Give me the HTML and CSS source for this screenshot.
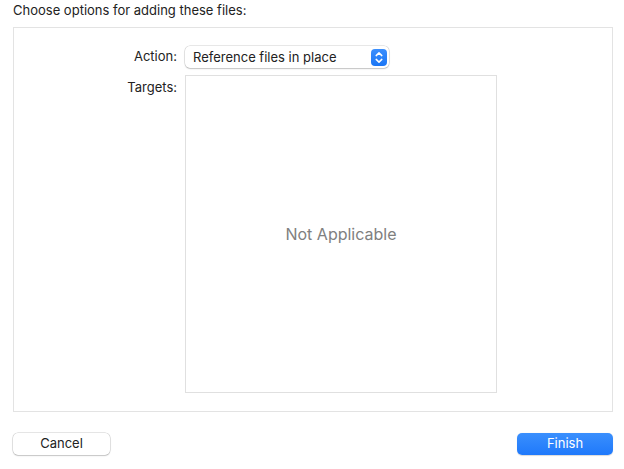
FILE: index.html
```html
<!DOCTYPE html>
<html>
<head>
<meta charset="utf-8">
<link rel="stylesheet" href="styles.css">
</head>
<body>
<div class="sheet">
  <div class="title">Choose options for adding these files:</div>
  <div class="panel">
    <div class="form">
      <div class="label action-label">Action:</div>
      <div class="popup">
        <span class="popup-text">Reference files in place</span>
        <span class="stepper">
          <svg width="16" height="17" viewBox="0 0 16 17">
            <path d="M5.2 6.6 L8 3.9 L10.8 6.6" fill="none" stroke="#fff" stroke-width="1.5" stroke-linecap="round" stroke-linejoin="round"/>
            <path d="M5.2 10.4 L8 13.1 L10.8 10.4" fill="none" stroke="#fff" stroke-width="1.5" stroke-linecap="round" stroke-linejoin="round"/>
          </svg>
        </span>
      </div>
      <div class="label targets-label">Targets:</div>
      <div class="targets">Not Applicable</div>
    </div>
  </div>
  <div class="footer">
    <button class="btn cancel">Cancel</button>
    <button class="btn finish">Finish</button>
  </div>
</div>
</body>
</html>
```
FILE: styles.css
```css
html, body {
  margin: 0;
  padding: 0;
  background: #ffffff;
}
body {
  font-family: Inter, "Liberation Sans", sans-serif;
  font-size: 13px;
  color: #222222;
}
.sheet {
  width: 624px;
  height: 469px;
  display: flex;
  flex-direction: column;
  padding: 0 11px 0 13px;
  box-sizing: border-box;
}
.title {
  height: 27px;
  line-height: 21px;
  box-sizing: border-box;
}
.panel {
  width: 600px;
  height: 385px;
  border: 1px solid #e3e3e3;
  box-sizing: border-box;
}
.form {
  display: grid;
  grid-template-columns: 163px 312px;
  column-gap: 8px;
  row-gap: 7px;
  padding-top: 18px;
}
.label {
  text-align: right;
  color: #222222;
}
.action-label {
  line-height: 21px;
}
.targets-label {
  line-height: 25px;
}
.popup {
  width: 204px;
  height: 22px;
  box-sizing: border-box;
  border-radius: 5px;
  background: #ffffff;
  box-shadow: 0 0 0 0.5px rgba(0,0,0,0.18), 0 1px 1.5px rgba(0,0,0,0.16);
  display: flex;
  align-items: center;
  justify-content: space-between;
  padding: 0 2px 1px 8px;
}
.popup-text {
  color: #222222;
}
.stepper {
  width: 16px;
  height: 17px;
  margin-top: 1px;
  border-radius: 4px;
  background: linear-gradient(#3b8ffd, #1b76f5);
  display: flex;
}
.targets {
  width: 312px;
  height: 318px;
  box-sizing: border-box;
  border: 1px solid #e0e0e0;
  display: flex;
  align-items: center;
  justify-content: center;
  font-size: 16px;
  color: #808080;
  padding-bottom: 1px;
}
.footer {
  display: flex;
  justify-content: space-between;
  margin-top: 21px;
  width: 600px;
}
.btn {
  height: 22px;
  border: none;
  border-radius: 5px;
  font-family: Inter, "Liberation Sans", sans-serif;
  font-size: 13px;
  padding: 0 0 2px 0;
  cursor: default;
}
.cancel {
  width: 97px;
  background: #ffffff;
  color: #222222;
  box-shadow: 0 0 0 0.5px rgba(0,0,0,0.2), 0 1px 1.5px rgba(0,0,0,0.15);
}
.finish {
  width: 96px;
  background: linear-gradient(#3a8ffd, #1f79fb);
  color: #ffffff;
  box-shadow: 0 0.5px 1px rgba(0,0,0,0.15);
}
```
